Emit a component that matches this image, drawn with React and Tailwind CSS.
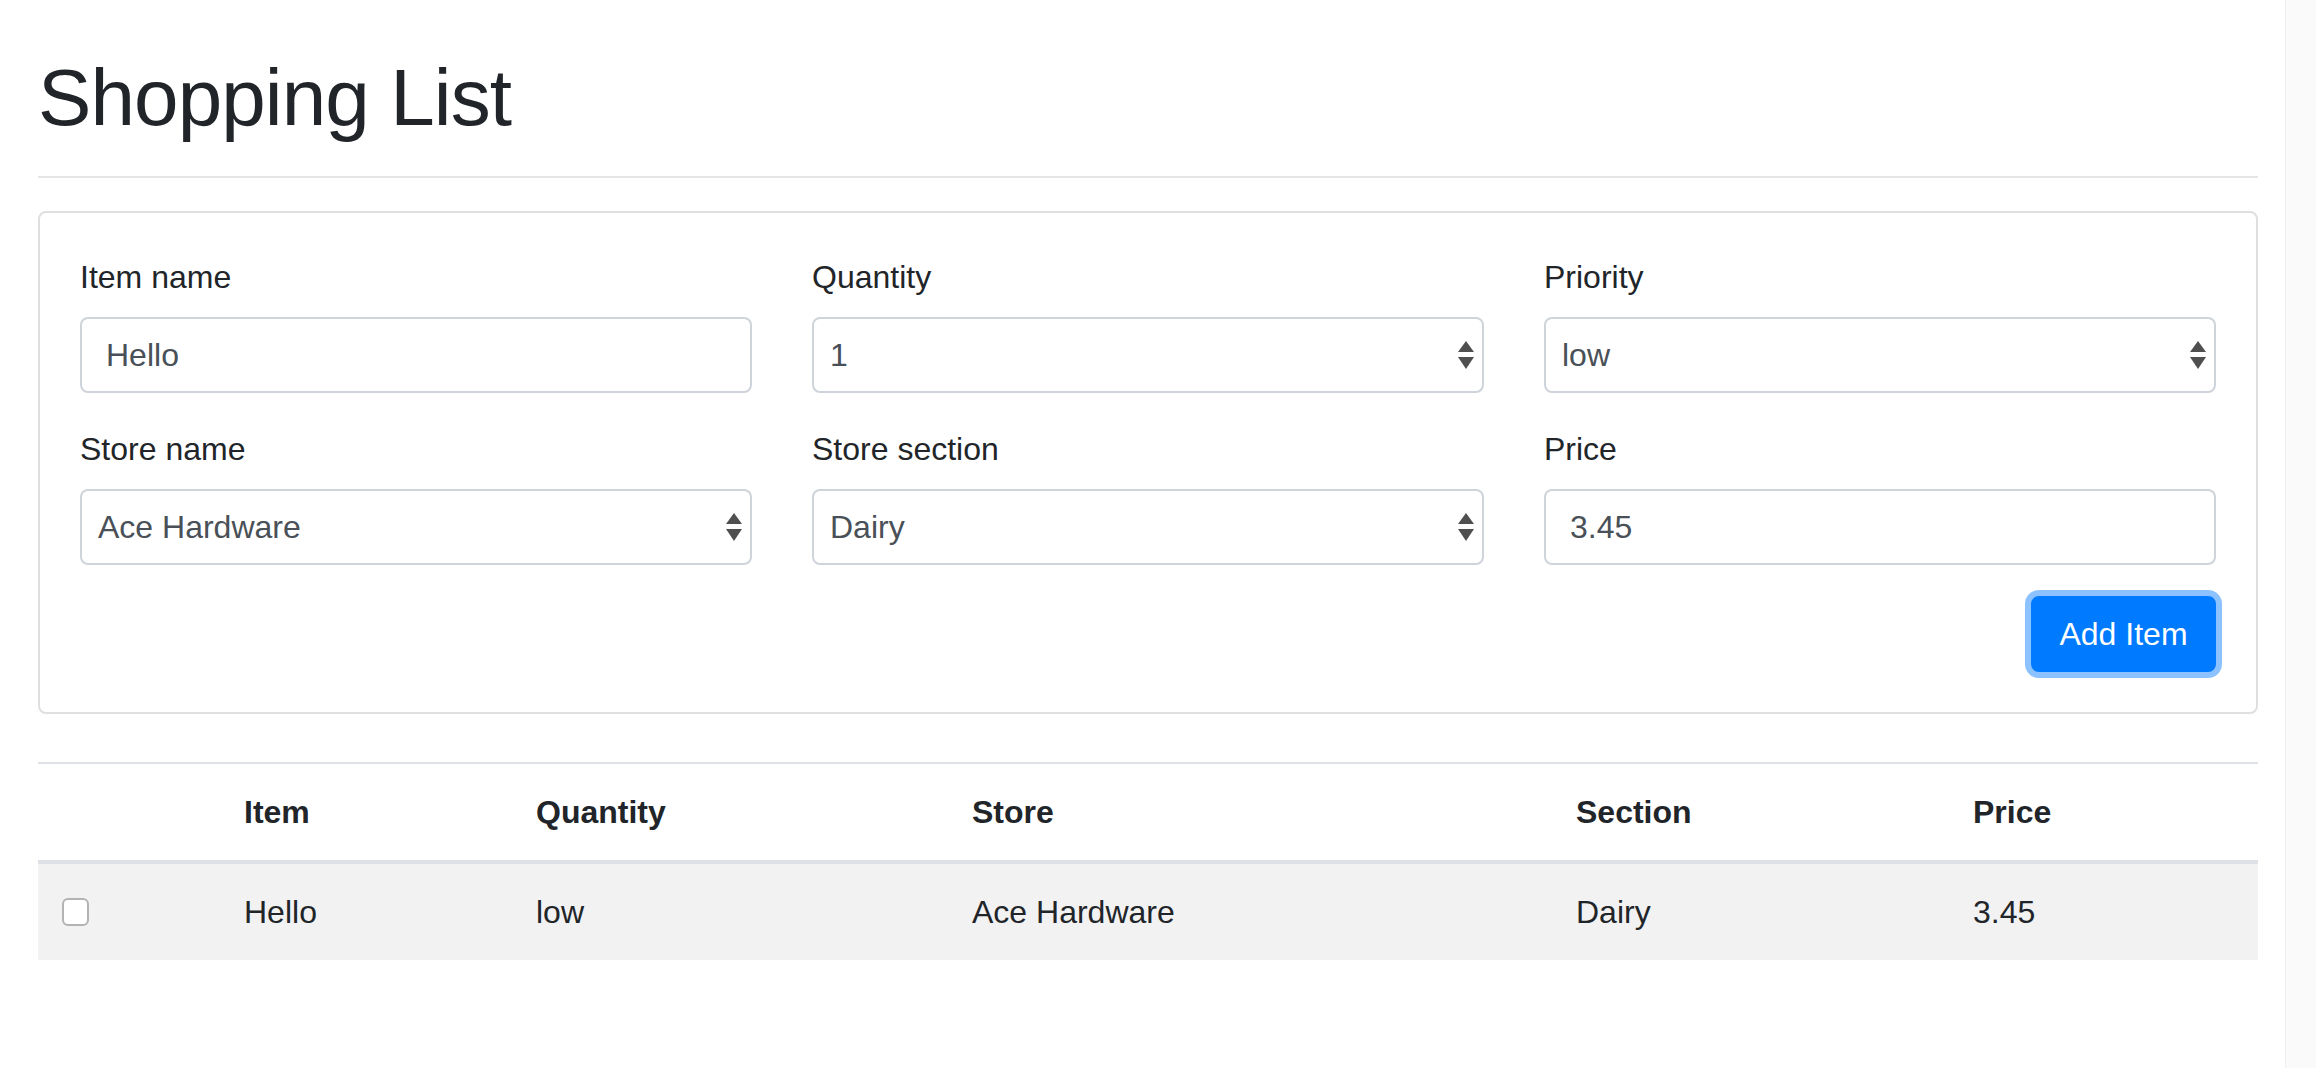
import React from 'react';

const SelectArrows = () => (
  <svg width="16" height="28" viewBox="0 0 16 28" className="shrink-0">
    <path d="M8 0 L16 11 L0 11 Z" fill="#4f4f4f" />
    <path d="M0 16 L16 16 L8 28 Z" fill="#4f4f4f" />
  </svg>
);

const Field = ({ label, children }) => (
  <div className="flex flex-col">
    <label className="text-[32px] leading-[48px] text-[#212529] mb-[16px]">{label}</label>
    {children}
  </div>
);

const TextBox = ({ value }) => (
  <div className="h-[76px] border-2 border-[#ced4da] rounded-[8px] bg-white flex items-center pl-[24px] text-[32px] text-[#495057]">
    {value}
  </div>
);

const FakeSelect = ({ value }) => (
  <div className="h-[76px] border-2 border-[#ced4da] rounded-[8px] bg-white flex items-center justify-between pl-[16px] pr-[8px] text-[32px] text-[#495057]">
    <span>{value}</span>
    <SelectArrows />
  </div>
);

const items = [
  { name: 'Hello', quantity: 'low', store: 'Ace Hardware', section: 'Dairy', price: '3.45' },
];

export default function App() {
  return (
    <div className="flex min-h-[1068px] bg-white font-['Liberation_Sans',Arial,sans-serif] text-[#212529]">
      <div className="flex-1">
        <div className="ml-[38px] w-[2220px] pt-[50px]">
          <h1 className="text-[80px] leading-[96px] font-medium tracking-[-0.9px] text-[#212529]">Shopping List</h1>
          <div className="mt-[30px] border-t-2 border-[#e5e5e5]" />

          <div className="mt-[33px] border-2 border-[#dfdfdf] rounded-[8px] px-[40px] pt-[40px] pb-[40px]">
            <div className="grid grid-cols-3 gap-x-[60px] gap-y-[32px]">
              <Field label="Item name">
                <TextBox value="Hello" />
              </Field>
              <Field label="Quantity">
                <FakeSelect value="1" />
              </Field>
              <Field label="Priority">
                <FakeSelect value="low" />
              </Field>
              <Field label="Store name">
                <FakeSelect value="Ace Hardware" />
              </Field>
              <Field label="Store section">
                <FakeSelect value="Dairy" />
              </Field>
              <Field label="Price">
                <TextBox value="3.45" />
              </Field>
            </div>
            <div className="flex justify-end mt-[31px]">
              <button
                type="button"
                className="w-[185px] h-[76px] rounded-[8px] bg-[#007bff] border-2 border-[#007bff] text-white text-[32px] shadow-[0_0_0_6px_#8cc2ff]"
              >
                Add Item
              </button>
            </div>
          </div>

          <table className="mt-[48px] w-[2220px] table-fixed border-collapse text-[32px] leading-[48px]">
            <colgroup>
              <col className="w-[182px]" />
              <col className="w-[292px]" />
              <col className="w-[436px]" />
              <col className="w-[604px]" />
              <col className="w-[397px]" />
              <col className="w-[309px]" />
            </colgroup>
            <thead>
              <tr className="border-t-2 border-b-4 border-[#dee2e6]">
                <th className="p-[24px]" />
                <th className="p-[24px] text-left font-bold">Item</th>
                <th className="p-[24px] text-left font-bold">Quantity</th>
                <th className="p-[24px] text-left font-bold">Store</th>
                <th className="p-[24px] text-left font-bold">Section</th>
                <th className="p-[24px] text-left font-bold">Price</th>
              </tr>
            </thead>
            <tbody>
              {items.map((it) => (
                <tr key={it.name} className="bg-[#f2f2f2]">
                  <td className="p-[24px]">
                    <div className="w-[27px] h-[28px] bg-white border-2 border-[#b3b3b3] rounded-[6px]" />
                  </td>
                  <td className="p-[24px]">{it.name}</td>
                  <td className="p-[24px]">{it.quantity}</td>
                  <td className="p-[24px]">{it.store}</td>
                  <td className="p-[24px]">{it.section}</td>
                  <td className="p-[24px]">{it.price}</td>
                </tr>
              ))}
            </tbody>
          </table>
        </div>
      </div>
      <div className="w-[31px] bg-[#fafafa] border-l border-[#f0f0f0]" />
    </div>
  );
}
